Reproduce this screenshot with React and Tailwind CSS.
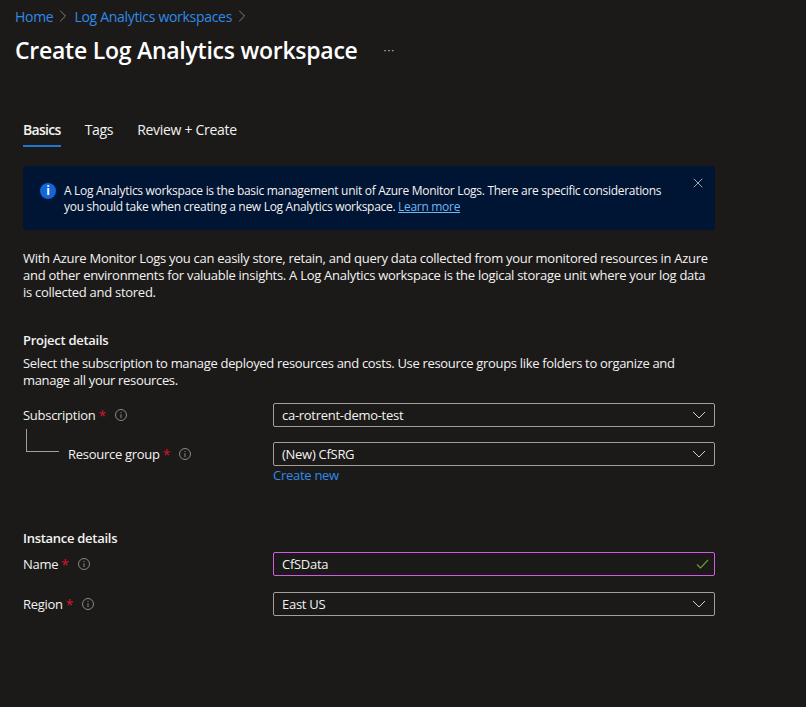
import { ChevronRight, X } from "lucide-react";

function InfoDot() {
  return (
    <svg width="12" height="12" viewBox="0 0 12 12" fill="none" className="block">
      <circle cx="6" cy="6" r="5.5" stroke="#8a8886" />
      <path d="M6 5.2V9" stroke="#8a8886" />
      <path d="M6 3V4" stroke="#8a8886" />
    </svg>
  );
}

function Label({ text, className = "" }) {
  return (
    <div className={`flex items-center text-[13px] text-[#f3f2f1] ${className}`}>
      <span className="pt-px">{text}</span>
      <span className="ml-[3px] pt-px text-[14px] text-[#d6132b]">*</span>
      <span className="ml-[9px]"><InfoDot /></span>
    </div>
  );
}

function Field({ value, focused, valid }) {
  return (
    <div className={`flex h-6 w-[442px] items-center justify-between rounded-[2px] border pl-2 text-[13px] text-[#f3f2f1] ${focused ? "border-[#d05ce3] pr-[5px]" : "border-[#a19f9d] pr-2"}`}>
      <span className="pt-px">{value}</span>
      {valid ? (
        <svg width="13" height="10" viewBox="0 0 13 10" fill="none">
          <path d="M1 5.5L4.5 9L12 1" stroke="#6f9e33" strokeWidth="1.1" />
        </svg>
      ) : (
        <svg width="14" height="8" viewBox="0 0 14 8" fill="none">
          <path d="M1 1L7 7L13 1" stroke="#d2d0ce" strokeWidth="1" />
        </svg>
      )}
    </div>
  );
}

export default function App() {
  return (
    <div className="h-[707px] w-[806px] overflow-hidden bg-[#1b1a19] font-['Open_Sans','Noto_Sans',sans-serif] text-[13px] tracking-[-0.28px] text-[#f3f2f1]">
      <div className="px-[15px] pt-[7px]">
        <div className="flex h-[18px] items-center text-[14px] tracking-[-0.3px] text-[#2f8ae8]">
          <span>Home</span>
          <ChevronRight size={20} strokeWidth={1.1} className="text-[#8a8886]" />
          <span className="ml-px">Log Analytics workspaces</span>
          <ChevronRight size={20} strokeWidth={1.1} className="text-[#8a8886]" />
        </div>
        <div className="mt-[8px] flex h-[34px] items-center">
          <h1 className="text-[23px] font-semibold tracking-[-0.25px] text-white">Create Log Analytics workspace</h1>
          <span className="ml-[26px] text-[11px] tracking-[1px] text-[#c8c6c4]">···</span>
        </div>
      </div>

      <div className="w-[715px] pl-[23px]">
        <div className="mt-[44px] flex h-[36px] gap-6 text-[14px] tracking-[-0.3px]">
          <div className="border-b-2 border-[#1b78d4] pt-[8px] font-semibold tracking-[-0.7px]">Basics</div>
          <div className="pt-[8px]">Tags</div>
          <div className="pt-[8px]">Review + Create</div>
        </div>

        <div className="mt-[19px] flex h-16 rounded-[2px] bg-[#001433] pl-[17px] pr-[9px] pt-[17px]">
          <span className="flex h-4 w-4 shrink-0 items-center justify-center rounded-full bg-[#1565d8] text-[12px] font-bold text-white">i</span>
          <p className="ml-[8px] w-[610px] shrink-0 text-[12px] leading-[16px] tracking-[-0.3px]">
            A Log Analytics workspace is the basic management unit of Azure Monitor Logs. There are specific considerations you should take when creating a new Log Analytics workspace. <span className="text-[#6cb8f6] underline">Learn more</span>
          </p>
          <X size={16} strokeWidth={1.25} className="-mt-[8px] ml-auto shrink-0 text-[#c8c6c4]" />
        </div>

        <p className="mt-[20px] leading-[17px]">
          With Azure Monitor Logs you can easily store, retain, and query data collected from your monitored resources in Azure and other environments for valuable insights. A Log Analytics workspace is the logical storage unit where your log data is collected and stored.
        </p>

        <h2 className="mt-[30px] font-semibold leading-[18px]">Project details</h2>
        <p className="mt-[6px] leading-[17px] tracking-[-0.33px]">
          Select the subscription to manage deployed resources and costs. Use resource groups like folders to organize and manage all your resources.
        </p>

        <div className="mt-[14px] flex items-center">
          <Label text="Subscription" className="w-[250px]" />
          <Field value="ca-rotrent-demo-test" />
        </div>

        <div className="relative mt-[15px] flex items-start">
          <div className="absolute left-[3px] top-[-13px] h-[23px] w-[33px] border-b border-l border-[#a19f9d]" />
          <div className="w-[250px] pl-[45px]">
            <Label text="Resource group" className="h-6" />
          </div>
          <div>
            <Field value="(New) CfSRG" />
            <div className="leading-[18px] text-[#2f8ae8]">Create new</div>
          </div>
        </div>

        <h2 className="mt-[45px] font-semibold leading-[18px]">Instance details</h2>

        <div className="mt-[5px] flex items-center">
          <Label text="Name" className="w-[250px]" />
          <Field value="CfSData" focused valid />
        </div>

        <div className="mt-4 flex items-center">
          <Label text="Region" className="w-[250px]" />
          <Field value="East US" />
        </div>
      </div>
    </div>
  );
}
